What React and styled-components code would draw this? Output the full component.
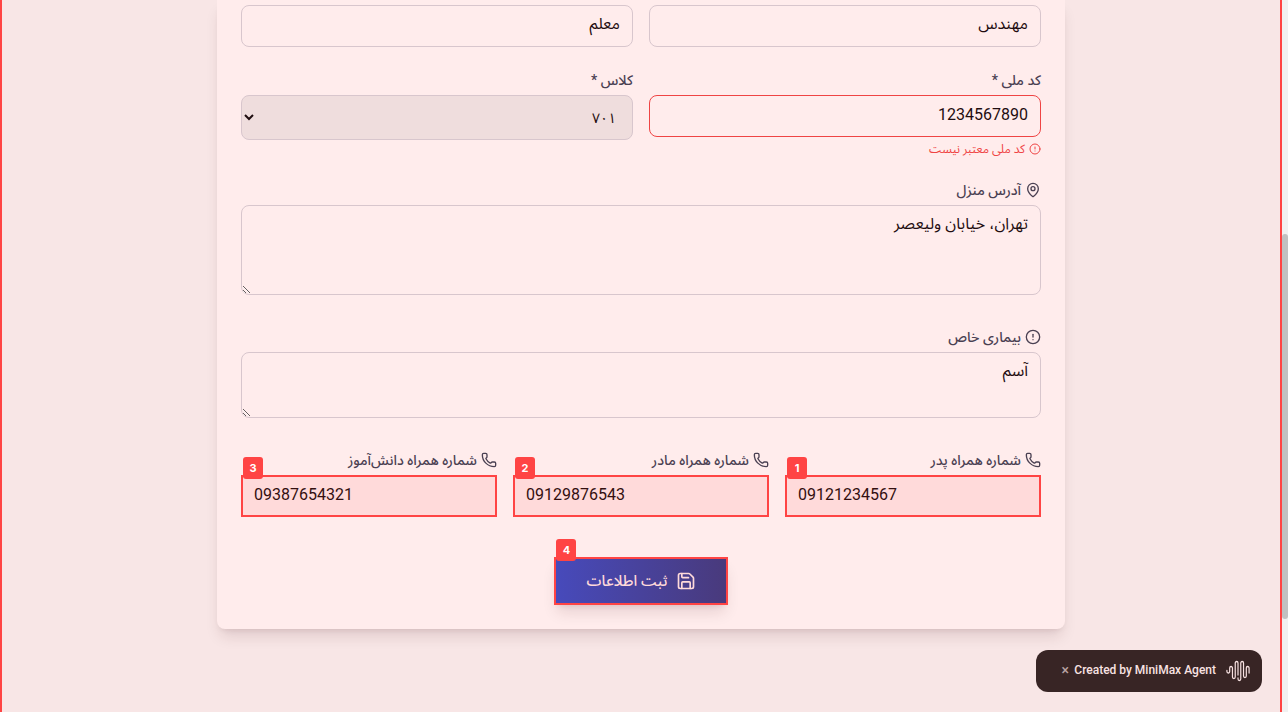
import React from "react";
import styled, { createGlobalStyle, css } from "styled-components";
import { MapPin, CircleAlert, Phone, Save } from "lucide-react";

const fontStack = `Roboto, "Noto Sans Arabic", "DejaVu Sans", sans-serif`;

const GlobalStyle = createGlobalStyle`
  *, *::before, *::after { box-sizing: border-box; }
  html, body { margin: 0; background: #f8e6e6; overflow: hidden; }
  body { font-family: ${fontStack}; font-size: 16px; line-height: 24px; color: #1f0d10; }
  input, select, textarea, button { font: inherit; color: inherit; margin: 0; }
`;

const Window = styled.div`
  display: flex;
  height: 100vh;
`;

const Page = styled.main`
  flex: 1;
  min-width: 0;
  overflow: hidden;
  border: solid #ff4444;
  border-width: 0 2px;
  background: #f8e6e6;
`;

const Rail = styled.div`
  display: flex;
  flex-direction: column;
  width: 6px;
  background: #f1f1f1;
`;

const RailSpace = styled.div`
  flex: ${(p) => p.$size} 0 0;
`;

const Thumb = styled.div`
  flex: 385 0 0;
  border-radius: 3px;
  background: #c1c1c1;
`;

const Card = styled.form`
  display: flex;
  flex-direction: column;
  gap: 24px;
  max-width: 848px;
  margin: 0 auto;
  padding: 5px 24px 24px;
  border-radius: 0 0 8px 8px;
  background: #ffecec;
  box-shadow: 0 10px 15px -3px rgba(60, 10, 20, 0.12), 0 4px 6px -4px rgba(60, 10, 20, 0.12);
`;

const Grid = styled.div`
  display: grid;
  grid-template-columns: repeat(${(p) => p.$columns}, minmax(0, 1fr));
  column-gap: 16px;
  align-items: start;
`;

const Field = styled.div`
  display: flex;
  flex-direction: column;
  position: relative;
`;

const Label = styled.label`
  display: flex;
  align-items: center;
  gap: 4px;
  height: 18px;
  margin-bottom: 6px;
  font-size: 14px;
  line-height: 18px;
  font-weight: 500;
  color: #4a4052;
`;

const control = css`
  width: 100%;
  border: 1px solid ${(p) => (p.$invalid ? "#ef4444" : "#d8c6cd")};
  border-radius: 8px;
  background: transparent;
  outline: none;
`;

const Input = styled.input`
  ${control}
  height: 42px;
  padding: 4px 12px 8px;
`;

const Select = styled.select`
  ${control}
  height: 45px;
  padding: 8px 12px;
  background: #efdddd;
  font-size: 14px;
`;

const TextArea = styled.textarea`
  ${control}
  display: block;
  height: ${(p) => (p.$rows === 3 ? 90 : 66)}px;
  margin-bottom: 9px;
  padding: 6px 12px;
  resize: vertical;
`;

const ErrorText = styled.p`
  display: flex;
  align-items: center;
  gap: 4px;
  margin: 4px 0 0;
  font-size: 12px;
  line-height: 16px;
  color: #ef4444;
`;

const MarkedInput = styled.input`
  width: 100%;
  height: 42px;
  padding: 2px 11px 6px;
  border: 2px solid #ff4444;
  border-radius: 0;
  background: #ffdada;
  color: #330f10;
  direction: ltr;
  text-align: left;
  outline: none;
`;

const Badge = styled.span`
  position: absolute;
  left: 2px;
  top: ${(p) => p.$top}px;
  width: 20px;
  height: 22px;
  border-radius: 3px;
  background: #ff4444;
  color: #fff;
  font: bold 11px/22px Inter, sans-serif;
  text-align: center;
`;

const Actions = styled.div`
  display: flex;
  justify-content: center;
  padding-top: 16px;
`;

const ButtonWrap = styled.div`
  position: relative;
`;

const SubmitButton = styled.button`
  display: flex;
  align-items: center;
  gap: 8px;
  height: 48px;
  padding: 0 30px;
  border: 2px solid #ff4444;
  background: linear-gradient(to left, #493a7c, #474abb);
  color: #ffdada;
  font-size: 15px;
  font-weight: 500;
  box-shadow: 0 10px 15px -3px rgba(60, 10, 20, 0.12), 0 4px 6px -4px rgba(60, 10, 20, 0.12);
`;

const Credit = styled.aside`
  position: fixed;
  right: 26px;
  bottom: 20px;
  display: flex;
  align-items: center;
  gap: 10px;
  height: 42px;
  padding: 0 12px 0 24px;
  border-radius: 12px;
  background: #382525;
  color: #f8e2e2;
  font-size: 12px;
  line-height: 16px;
  font-weight: 500;
  direction: ltr;
`;

const CreditText = styled.span`
  display: flex;
  align-items: center;
  gap: 4px;
  padding-bottom: 2px;
`;

const CloseButton = styled.button`
  width: 10px;
  padding: 0;
  border: 0;
  background: none;
  color: #b8a3a3;
  font-size: 14px;
  line-height: 16px;
`;

function Wave() {
  return (
    <svg width="24" height="22" viewBox="0 0 26 22" preserveAspectRatio="none" fill="none" stroke="currentColor" strokeWidth="1.3" strokeLinecap="round" aria-hidden="true">
      <path d="M1 10.5v1a1.5 1.5 0 0 0 3 0V8a1.5 1.5 0 0 1 3 0v9a1.5 1.5 0 0 0 3 0V3a1.5 1.5 0 0 1 3 0v12M13 18v1a1.5 1.5 0 0 0 3 0V3a1.5 1.5 0 0 1 3 0v13a1.5 1.5 0 0 0 3 0V8a1.5 1.5 0 0 1 3 0v5" />
    </svg>
  );
}

function PhoneField({ id, label, value, mark }) {
  return (
    <Field>
      <Label htmlFor={id}><Phone size={16} />{label}</Label>
      <MarkedInput id={id} type="tel" defaultValue={value} />
      <Badge $top={6}>{mark}</Badge>
    </Field>
  );
}

export default function App() {
  return (
    <>
      <GlobalStyle />
      <Window>
        <Page dir="rtl" lang="fa">
          <Card>
            <Grid $columns={2}>
              <Input defaultValue="مهندس" aria-label="شغل پدر" />
              <Input defaultValue="معلم" aria-label="شغل مادر" />
            </Grid>
            <Grid $columns={2}>
              <Field>
                <Label htmlFor="national">کد ملی *</Label>
                <Input id="national" defaultValue="1234567890" $invalid />
                <ErrorText><CircleAlert size={12} />کد ملی معتبر نیست</ErrorText>
              </Field>
              <Field>
                <Label htmlFor="class">کلاس *</Label>
                <Select id="class" defaultValue="701"><option value="701">۷۰۱</option></Select>
              </Field>
            </Grid>
            <Field>
              <Label htmlFor="address"><MapPin size={16} />آدرس منزل</Label>
              <TextArea id="address" $rows={3} defaultValue="تهران، خیابان ولیعصر" />
            </Field>
            <Field>
              <Label htmlFor="illness"><CircleAlert size={16} />بیماری خاص</Label>
              <TextArea id="illness" $rows={2} defaultValue="آسم" />
            </Field>
            <Grid $columns={3}>
              <PhoneField id="father" label="شماره همراه پدر" value="09121234567" mark="1" />
              <PhoneField id="mother" label="شماره همراه مادر" value="09129876543" mark="2" />
              <PhoneField id="student" label="شماره همراه دانش‌آموز" value="09387654321" mark="3" />
            </Grid>
            <Actions>
              <ButtonWrap>
                <SubmitButton type="button"><Save size={20} />ثبت اطلاعات</SubmitButton>
                <Badge $top={-18}>4</Badge>
              </ButtonWrap>
            </Actions>
          </Card>
        </Page>
        <Rail aria-hidden="true">
          <RailSpace $size={234} />
          <Thumb />
          <RailSpace $size={93} />
        </Rail>
      </Window>
      <Credit>
        <CreditText>
          <CloseButton type="button" aria-label="Close">×</CloseButton>
          Created by MiniMax Agent
        </CreditText>
        <Wave />
      </Credit>
    </>
  );
}
